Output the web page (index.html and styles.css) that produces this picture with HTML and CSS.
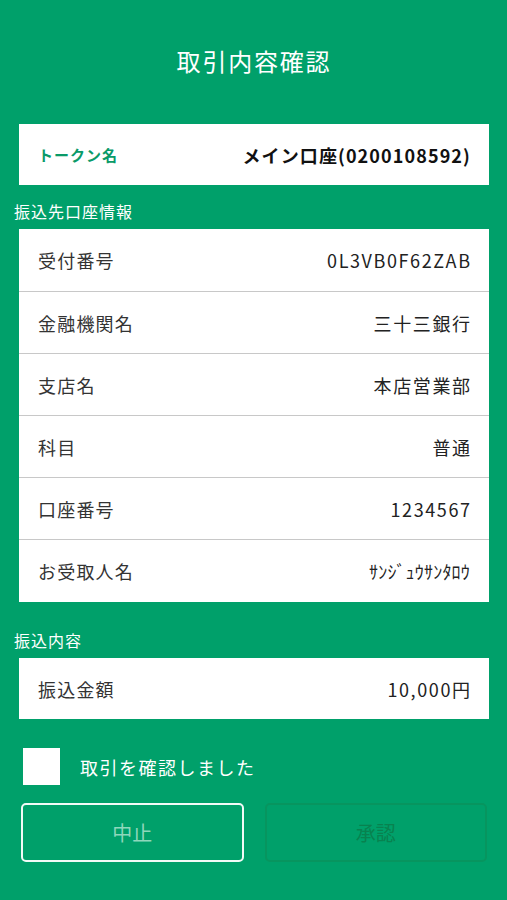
FILE: index.html
```html
<!DOCTYPE html>
<html lang="ja">
<head>
	<meta charset="utf-8">
	<title>取引内容確認</title>
	<link rel="stylesheet" href="styles.css">
</head>
<body>
	<div class="screen">
		<h1 class="title">取引内容確認</h1>

		<div class="card token">
			<span class="token-label">トークン名</span>
			<span class="token-value">メイン口座(0200108592)</span>
		</div>

		<div class="section-label">振込先口座情報</div>
		<div class="card list">
			<div class="row"><span class="label">受付番号</span><span class="value">0L3VB0F62ZAB</span></div>
			<div class="row"><span class="label">金融機関名</span><span class="value">三十三銀行</span></div>
			<div class="row"><span class="label">支店名</span><span class="value">本店営業部</span></div>
			<div class="row"><span class="label">科目</span><span class="value">普通</span></div>
			<div class="row"><span class="label">口座番号</span><span class="value">1234567</span></div>
			<div class="row"><span class="label">お受取人名</span><span class="value kana">ｻﾝｼﾞｭｳｻﾝﾀﾛｳ</span></div>
		</div>

		<div class="section-label">振込内容</div>
		<div class="card list">
			<div class="row"><span class="label">振込金額</span><span class="value">10,000円</span></div>
		</div>

		<label class="confirm">
			<span class="checkbox"></span>
			<span class="confirm-text">取引を確認しました</span>
		</label>

		<div class="buttons">
			<a class="button button-cancel">中止</a>
			<a class="button button-disabled">承認</a>
		</div>
	</div>
</body>
</html>
```

FILE: styles.css
```css
html,
body {
	margin: 0;
	padding: 0;
	background: #00a06a;
}

body {
	font-family: "Noto Sans CJK JP", "Noto Sans", sans-serif;
	color: #fff;
}

.screen {
	width: 507px;
	height: 900px;
	box-sizing: border-box;
	padding: 0 18px 0 19px;
	display: flex;
	flex-direction: column;
}

.title {
	margin: 0;
	padding-top: 44px;
	height: 80px;
	box-sizing: border-box;
	font-size: 24px;
	font-weight: 400;
	line-height: 34px;
	text-align: center;
	letter-spacing: 1.8px;
}

.card {
	background: #fff;
	color: #222;
}

.token {
	margin-top: 44px;
	height: 61px;
	display: flex;
	align-items: center;
	justify-content: space-between;
	padding: 0 19px;
}

.token-label {
	color: #0a9a68;
	font-size: 15px;
	font-weight: 700;
	letter-spacing: 1px;
}

.token-value {
	font-size: 18px;
	font-weight: 700;
	color: #111;
	letter-spacing: 1.1px;
	margin-right: -1px;
}

.section-label {
	margin-left: -5px;
	height: 44px;
	line-height: 52px;
	font-size: 16px;
	letter-spacing: 1px;
}

.list .row {
	height: 62px;
	display: flex;
	align-items: center;
	justify-content: space-between;
	padding: 0 19px;
	border-top: 1px solid #c8c8c8;
	box-sizing: border-box;
}

.list .row:first-child {
	border-top: none;
}

.list .row:last-child {
	height: 63px;
}

.list .row:only-child {
	height: 61px;
}

.label {
	font-size: 18px;
	color: #333;
	letter-spacing: 1.2px;
}

.value {
	font-size: 18px;
	color: #222;
	letter-spacing: 1.6px;
	margin-right: -1.6px;
}

.kana {
	letter-spacing: 0.2px;
	margin-right: 0;
}

.list + .section-label {
	height: 56px;
	line-height: 76px;
}

.confirm {
	display: flex;
	align-items: center;
	margin-top: 29px;
	margin-left: 4px;
	height: 37px;
}

.checkbox {
	width: 37px;
	height: 37px;
	background: #fff;
}

.confirm-text {
	margin-left: 20px;
	font-size: 18px;
	letter-spacing: 1.5px;
}

.buttons {
	margin-top: 18px;
	display: flex;
	gap: 21px;
	padding-left: 2px;
	padding-right: 2px;
}

.button {
	flex: 1;
	height: 59px;
	box-sizing: border-box;
	border-radius: 5px;
	display: flex;
	align-items: center;
	justify-content: center;
	font-size: 20px;
	text-decoration: none;
}

.button-cancel {
	border: 2px solid #f2fbf7;
	color: #8fd7bb;
}

.button-disabled {
	border: 2px solid #07955f;
	color: #08824f;
}
```
